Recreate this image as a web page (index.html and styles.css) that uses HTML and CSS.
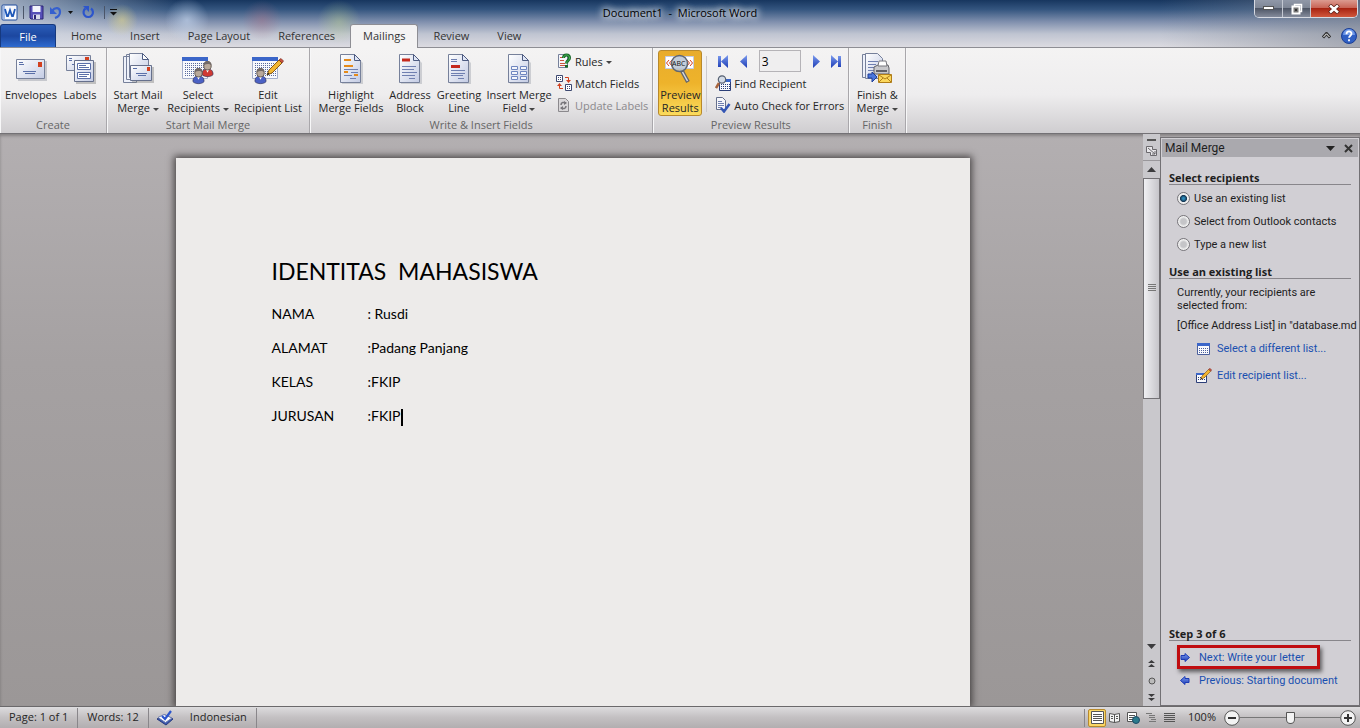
FILE: index.html
```html
<!DOCTYPE html>
<html lang="en">
<head>
    <meta charset="UTF-8">
    <meta name="viewport" content="width=device-width, initial-scale=1.0">
    <title>Document1 - Microsoft Word</title>
    <link rel="stylesheet" href="styles.css">
</head>
<body>
    <!-- shared icon shapes -->
    <svg class="defs" aria-hidden="true">
        <defs>
            <linearGradient id="paper" x1="0" y1="0" x2="1" y2="1">
                <stop offset="0" stop-color="#ffffff"/><stop offset="1" stop-color="#c3cbe4"/>
            </linearGradient>
            <linearGradient id="blue" x1="0" y1="0" x2="0" y2="1">
                <stop offset="0" stop-color="#7d9df0"/><stop offset="1" stop-color="#1c3bb4"/>
            </linearGradient>
            <symbol id="sheet" viewBox="0 0 24 32">
                <path d="M3 3h14l7 7v21H3z" fill="#8a8f9c" opacity=".35"/>
                <path d="M1.500 1.500h14l6 6v22h-20z" fill="url(#paper)" stroke="#76809a"/>
                <path d="M15.500 1.500v6h6z" fill="#dfe5f5" stroke="#4c5a80"/>
            </symbol>
            <symbol id="grid" viewBox="0 0 26 23">
                <path d="M.5.500h25v21H.5z" fill="#f8f9fd" stroke="#a4aecb"/>
                <path d="M0 0h26v4H0z" fill="#3b66c9"/>
                <path d="M3 6.500h21M3 8.500h21M3 10.500h21M3 12.500h21M3 14.500h21M3 16.500h21M3 18.500h21" stroke="#5a6a9c" stroke-dasharray="1 1"/>
            </symbol>
            <symbol id="person" viewBox="0 0 14 18">
                <path d="M1 15c0-5 3-6 6-6s6 1 6 6c-2 3-10 3-12 0z" fill="currentColor" stroke="#2d2f55" stroke-width=".7"/>
                <path d="M5 9l2 4 2-4z" fill="#fff"/>
                <ellipse cx="7" cy="5.500" rx="4" ry="4.500" fill="#b9a99a" stroke="#5d534d"/>
                <path d="M3 5c0-6 8-6 8 0-2-2-5-2-8 0z" fill="#716966"/>
            </symbol>
            <symbol id="pencil" viewBox="0 0 18 18">
                <path d="M1 17l2-5L13 2l3 3L6 15z" fill="#f2b632" stroke="#8a5a14"/>
                <path d="M13 2l2-1.500 2.500 2.500L16 5z" fill="#c9523e" stroke="#7a2d25" stroke-width=".7"/>
                <path d="M1 17l1-2.500L3.500 16z" fill="#222"/>
            </symbol>
        </defs>
    </svg>

    <header class="top">
        <div class="titlebar">
            <div class="quick-access">
                <button class="qa" aria-label="Word">
                    <svg width="17" height="17" viewBox="0 0 17 17"><rect x="1" y="1" width="15" height="15" rx="1" fill="#f7f9fd" stroke="#1c4a9c"/><path d="M2 2h2v13H2z" fill="#9fb9e6"/><path d="M4 5l2 7h1l2-6 2 6h1l2-7" fill="none" stroke="#1d57b8" stroke-width="1.800"/></svg>
                </button>
                <span class="bar"></span>
                <button class="qa" aria-label="Save">
                    <svg width="15" height="15" viewBox="0 0 15 15"><path d="M1 1h13v13H2l-1-1z" fill="#5750b8" stroke="#2c2575"/><path d="M3.500 1h8v6h-8z" fill="#f3f4fc"/><path d="M4 9.500h7V14H4z" fill="#d9dbea"/><path d="M5 10h2v4H5z" fill="#2c2575"/></svg>
                </button>
                <button class="qa" aria-label="Undo">
                    <svg width="14" height="15" viewBox="0 0 14 15"><path d="M3 6c3-4 8-4 8 1 0 3-2 5-5 6" fill="none" stroke="#3560cf" stroke-width="2.200"/><path d="M1 2v7h7z" fill="#3560cf"/></svg>
                </button>
                <svg width="5" height="3"><path d="M0 0h5L2.500 3z" fill="#111"/></svg>
                <button class="qa redo" aria-label="Repeat">
                    <svg width="13" height="14" viewBox="0 0 13 14"><path d="M9 3.500a4.700 4.700 0 1 1-5.500 0" fill="none" stroke="#2c55cc" stroke-width="2.200"/><path d="M1 1h6v6z" fill="#2c55cc"/></svg>
                </button>
                <span class="bar"></span>
                <svg width="7" height="7"><path d="M0 .500h7" stroke="#111"/><path d="M0 3h7L3.500 6.500z" fill="#111"/></svg>
            </div>
            <div class="title">Document1&nbsp; -&nbsp; Microsoft Word</div>
            <div class="window-buttons">
                <button aria-label="Minimize"><svg width="11" height="5"><rect x=".5" y=".5" width="10" height="3" fill="#fff" stroke="#555"/></svg></button>
                <button aria-label="Restore"><svg width="12" height="12"><path d="M3.500 1.500h7v7h-7z" fill="none" stroke="#fff" stroke-width="1.500"/><path d="M1.500 3.500h7v7h-7z" fill="#777" stroke="#fff" stroke-width="2"/><path d="M4 6h2v2H4z" fill="#333"/></svg></button>
                <button class="close" aria-label="Close"><svg width="12" height="10"><path d="M1.500 1l9 8M10.500 1l-9 8" stroke="#5e2018" stroke-width="4"/><path d="M2 1.500l8 7M10 1.500l-8 7" stroke="#fff" stroke-width="2.500"/></svg></button>
            </div>
        </div>
        <nav class="tabs">
            <button class="tab file">File</button>
            <button class="tab">Home</button>
            <button class="tab">Insert</button>
            <button class="tab">Page Layout</button>
            <button class="tab">References</button>
            <button class="tab active">Mailings</button>
            <button class="tab">Review</button>
            <button class="tab">View</button>
            <div class="help">
                <button aria-label="Minimize the Ribbon"><svg width="9" height="7"><path d="M1 5.500l3.500-4 3.500 4" fill="none" stroke="#333" stroke-width="3"/><path d="M1.500 5l3-3.200 3 3.200" fill="none" stroke="#fff"/></svg></button>
                <button aria-label="Help"><svg width="16" height="16"><circle cx="8" cy="8" r="7.500" fill="#2f5fc4" stroke="#1c3f94"/><path d="M2 7a6 6 0 0 1 12 0z" fill="#6f98e6"/><path d="M5.500 6.200c0-3.600 5-3.600 5-.4 0 1.900-2.400 2-2.400 4M8 11.200v2" fill="none" stroke="#fff" stroke-width="1.800"/></svg></button>
            </div>
        </nav>
    </header>

    <section class="ribbon">
        <div class="group">
            <div class="tools">
                <button class="big w54">
                    <svg width="34" height="32"><path d="M4 8h29v20H4z" fill="#8a8f9c" opacity=".4"/><path d="M2.500 6.500h28v19h-28z" fill="url(#paper)" stroke="#76809a"/><path d="M5 9.500h4M5 11.500h5M9 18.500h13M11 20.500h10" stroke="#5a6fa8"/><path d="M24 9h4v5h-4z" fill="#d2401f"/></svg>
                    <span>Envelopes</span>
                </button>
                <button class="big w44">
                    <svg width="32" height="32"><path d="M2.500 2.500h24v15h-24z" fill="url(#paper)" stroke="#76809a"/><path d="M5 5.500h3M5 7.500h3M8 11.500h3" stroke="#5a6fa8"/><path d="M21 4h4v4h-4z" fill="#d2401f"/><path d="M12 9h20v22H12z" fill="#777" opacity=".4"/><path d="M10.500 7.500h19v21h-19z" fill="url(#paper)" stroke="#66708c"/><path d="M13.500 10.500h13v6h-13zM13.500 19.500h13v6h-13z" fill="#fff" stroke="#5a6fa8"/><path d="M15 12.500h7M15 14.500h10M15 21.500h10M15 23.500h8" stroke="#5a6fa8"/></svg>
                    <span>Labels</span>
                </button>
            </div>
            <div class="group-name">Create</div>
        </div>

        <div class="group">
            <div class="tools">
                <button class="big w54">
                    <svg width="32" height="32"><path d="M1.500 3.500h13v26h-13zM4.500 1.500h14v25h-14z" fill="#eef1fa" stroke="#76809a"/><path d="M7.500.500h13l6 6v18h-19z" fill="url(#paper)" stroke="#76809a"/><path d="M20.500.500v6h6z" fill="#fff" stroke="#4c5a80"/><path d="M10 14h22v16H10z" fill="#777" opacity=".4"/><path d="M8.500 12.500h21v15h-21z" fill="url(#paper)" stroke="#66708c"/><path d="M11 15.500h4M14 20.500h11M16 22.500h8" stroke="#5a6fa8"/><path d="M25 14h3v4h-3z" fill="#d2401f"/></svg>
                    <span>Start Mail<br>Merge <i class="arrow"></i></span>
                </button>
                <button class="big w66">
                    <svg width="32" height="32"><use href="#grid" x="0" y="4" width="26" height="23"/><use href="#person" x="19" y="7" width="13" height="18" class="red"/><use href="#person" x="10" y="14" width="13" height="18" class="navy"/></svg>
                    <span>Select<br>Recipients <i class="arrow"></i></span>
                </button>
                <button class="big w74">
                    <svg width="32" height="32"><use href="#grid" x="0" y="4" width="26" height="23"/><use href="#pencil" x="14" y="5" width="18" height="18"/><use href="#person" x="2" y="14" width="13" height="18" class="navy"/></svg>
                    <span>Edit<br>Recipient List</span>
                </button>
            </div>
            <div class="group-name">Start Mail Merge</div>
        </div>

        <div class="group">
            <div class="tools">
                <button class="big w74">
                    <svg width="24" height="32"><use href="#sheet"/><path d="M5 7h7M5 13h9M5 19h4M15 22h4" stroke="#e58a1b" stroke-width="2"/><path d="M5 16.500h14M12 19.500h7M5 22.500h8M11 25.500h6" stroke="#6f7fb0"/></svg>
                    <span>Highlight<br>Merge Fields</span>
                </button>
                <button class="big w44">
                    <svg width="24" height="32"><use href="#sheet"/><path d="M4 7h8" stroke="#c5291c" stroke-width="3"/><path d="M4 13.500h14M4 16.500h12M4 19.500h15M4 22.500h13M11 25.500h6" stroke="#6f7fb0"/></svg>
                    <span>Address<br>Block</span>
                </button>
                <button class="big w54">
                    <svg width="24" height="32"><use href="#sheet"/><path d="M4 13.500h9" stroke="#c5291c" stroke-width="3"/><path d="M4 6.500h6M4 8.500h6M4 17.500h14M4 20.500h14M4 22.500h12M11 25.500h6" stroke="#6f7fb0"/></svg>
                    <span>Greeting<br>Line</span>
                </button>
                <button class="big w66">
                    <svg width="24" height="32"><use href="#sheet"/><path d="M4.500 13.500h6v3h-6zM13.500 13.500h6v3h-6zM4.500 18.500h6v3h-6zM13.500 18.500h6v3h-6zM4.500 23.500h6v3h-6zM13.500 23.500h6v3h-6z" fill="#f4f6fc" stroke="#6f86c0"/></svg>
                    <span>Insert Merge<br>Field <i class="arrow"></i></span>
                </button>
                <div class="stack">
                    <button class="small">
                        <svg width="16" height="16"><path d="M2.500 1.500h9v13h-9z" fill="#f5f6fa" stroke="#76809a"/><path d="M4 4.500h4M4 7.500h4M4 10.500h5M4 12.500h5" stroke="#c9523e"/><path d="M7.500 5c0-4 6-4 6 0 0 2.500-3 2.500-3 5.500M10.500 12v2.500" fill="none" stroke="#17682a" stroke-width="3"/><path d="M7.500 5c0-4 6-4 6 0 0 2.500-3 2.500-3 5.500" fill="none" stroke="#4dbb55"/></svg>
                        <span>Rules <i class="arrow"></i></span>
                    </button>
                    <button class="small">
                        <svg width="16" height="16"><path d="M.5.500h6v6h-6zM9.500 9.500h6v6h-6z" fill="#fff" stroke="#3d4870"/><path d="M2 2.500h3M2 4.500h3M11 11.500h3M11 13.500h3" stroke="#3d4870" stroke-dasharray="1 1"/><path d="M9 2.500h3.500V6M7 13.500H3.500V10" fill="none" stroke="#d2401f"/><path d="M10 5h5l-2.500 3zM1 11h5L3.500 8z" fill="#d2401f"/></svg>
                        <span>Match Fields</span>
                    </button>
                    <button class="small" disabled>
                        <svg width="16" height="16"><path d="M2.500 1.500h7l3 3v10h-10z" fill="#d9d7d9" stroke="#8b898d"/><path d="M5 8c0-3 3-3 5-2M10 9c0 3-3 3-5 2" fill="none" stroke="#77757a" stroke-width="1.500"/><path d="M8 4l3 2-3 2zM7 9l-3 2 3 2z" fill="#77757a"/></svg>
                        <span>Update Labels</span>
                    </button>
                </div>
            </div>
            <div class="group-name">Write &amp; Insert Fields</div>
        </div>

        <div class="group">
            <div class="tools">
                <button class="big preview">
                    <svg width="32" height="32"><path d="M1.500 3.500h28v12h-28z" fill="#fff" stroke="#c3cbe4"/><path d="M5 7l-2.500 3L5 13M8 7l-2.500 3L8 13M23 7l2.500 3L23 13M26 7l2.500 3L26 13" fill="none" stroke="#d2401f"/><path d="M18 18l6 11" stroke="#64666c" stroke-width="4"/><path d="M18.500 19l5 9" stroke="#d7d9de" stroke-width="1.500"/><circle cx="15.500" cy="10.500" r="8" fill="#b9c4d4" fill-opacity=".85" stroke="#5f6672" stroke-width="1.500"/><text x="8" y="13" class="abc">ABC</text></svg>
                    <span>Preview<br>Results</span>
                </button>
                <span class="rule"></span>
                <div class="stack">
                    <div class="record">
                        <button aria-label="First Record"><svg width="12" height="13"><path d="M1 1h3v11H1zM11 0v13L4 6.500z" fill="url(#blue)"/></svg></button>
                        <button aria-label="Previous Record"><svg width="8" height="13"><path d="M7 0v13L0 6.500z" fill="url(#blue)"/></svg></button>
                        <input type="text" value="3" aria-label="Record">
                        <button aria-label="Next Record"><svg width="8" height="13"><path d="M1 0v13l7-6.500z" fill="url(#blue)"/></svg></button>
                        <button aria-label="Last Record"><svg width="12" height="13"><path d="M8 1h3v11H8zM1 0v13l7-6.500z" fill="url(#blue)"/></svg></button>
                    </div>
                    <button class="small">
                        <svg width="16" height="16"><path d="M4.500 5.500h11v10h-11z" fill="#f8f9fd" stroke="#2c3f78"/><path d="M10 4h6v3h-6z" fill="#3b66c9"/><path d="M6 9.500h9M6 11.500h9M6 13.500h9" stroke="#2c3f78" stroke-dasharray="1 1"/><path d="M4 8l-3 5" stroke="#a8643c" stroke-width="2.500"/><circle cx="7" cy="4.500" r="3.700" fill="#d3dbe6" stroke="#555f70" stroke-width="1.200"/></svg>
                        <span>Find Recipient</span>
                    </button>
                    <button class="small">
                        <svg width="16" height="16"><path d="M1.500.500h6l3 3v9h-9z" fill="#f5f6fa" stroke="#66708c"/><path d="M3 4.500h4M3 6.500h6M3 8.500h6M3 10.500h4" stroke="#6f7fb0"/><path d="M6 11l3 3.500L14.500 7" fill="none" stroke="#3456b4" stroke-width="2.500"/></svg>
                        <span>Auto Check for Errors</span>
                    </button>
                </div>
            </div>
            <div class="group-name">Preview Results</div>
        </div>

        <div class="group">
            <div class="tools">
                <button class="big w48">
                    <svg width="32" height="32"><path d="M1.500 1.500h13v23h-13z" fill="#eef1fa" stroke="#76809a"/><path d="M4.500.500h12l5 5v20h-17z" fill="url(#paper)" stroke="#76809a"/><path d="M7 8.500h10M7 11.500h8M7 14.500h6M7 17.500h6" stroke="#6f7fb0"/><path d="M13 14l4-2h10l1 3v6H13z" fill="#c8c8cb" stroke="#606066"/><path d="M17 13l1-5h7l1 5z" fill="#fff" stroke="#77777c"/><path d="M15 18h11" stroke="#606066" stroke-width="2"/><path d="M7 21v4h4v4l5-5-5-5v2z" fill="#4a76dc" stroke="#203f98"/><path d="M17.500 21.500h13v8h-13z" fill="#fbd75c" stroke="#b07d18"/><path d="M18 22l6 4 6-4M18 29l4-4M30 29l-4-4" fill="none" stroke="#b07d18"/></svg>
                    <span>Finish &amp;<br>Merge <i class="arrow"></i></span>
                </button>
            </div>
            <div class="group-name">Finish</div>
        </div>
    </section>

    <main class="workspace">
        <div class="canvas">
            <article class="page">
                <h1>IDENTITAS&nbsp; MAHASISWA</h1>
                <p><span>NAMA</span><span>: Rusdi</span></p>
                <p><span>ALAMAT</span><span>:Padang Panjang</span></p>
                <p><span>KELAS</span><span>:FKIP</span></p>
                <p><span>JURUSAN</span><span class="caret">:FKIP</span></p>
            </article>
        </div>

        <div class="scrollbar">
            <span class="split"></span>
            <button class="ruler" aria-label="View Ruler"><svg width="12" height="12"><path d="M.5 1.500h6v3h4v6h-6v-3h-4z" fill="#e8e7ea" stroke="#6b696d"/><path d="M2 3l7 6M6 9h3V6" fill="none" stroke="#6b696d"/></svg></button>
            <button aria-label="Scroll up"><svg width="9" height="5"><path d="M0 5h9L4.500 0z" fill="#3c3c3e"/></svg></button>
            <div class="track">
                <div class="thumb"><svg width="8" height="8"><path d="M0 .500h8M0 2.500h8M0 4.500h8M0 6.500h8" stroke="#777"/></svg></div>
            </div>
            <button aria-label="Scroll down"><svg width="9" height="5"><path d="M0 0h9L4.500 5z" fill="#3c3c3e"/></svg></button>
            <button class="browse" aria-label="Previous Page"><svg width="7" height="7"><path d="M0 3h7L3.500 0zM0 7h7L3.500 4z" fill="#3c3c3e"/></svg></button>
            <button class="browse" aria-label="Select Browse Object"><svg width="8" height="8"><circle cx="4" cy="4" r="3" fill="#bbb" stroke="#555"/></svg></button>
            <button class="browse" aria-label="Next Page"><svg width="7" height="7"><path d="M0 0h7L3.500 3zM0 4h7L3.500 7z" fill="#3c3c3e"/></svg></button>
        </div>

        <aside class="pane">
            <div class="pane-title">
                <span>Mail Merge</span>
                <button aria-label="Task Pane Options"><svg width="9" height="5"><path d="M0 0h9L4.500 5z" fill="#222"/></svg></button>
                <button aria-label="Close pane"><svg width="9" height="9"><path d="M1 1l7 7M8 1L1 8" stroke="#333" stroke-width="2"/></svg></button>
            </div>
            <div class="pane-body">
                <h2>Select recipients</h2>
                <div class="options">
                    <label><input type="radio" name="source" checked>Use an existing list</label>
                    <label><input type="radio" name="source">Select from Outlook contacts</label>
                    <label><input type="radio" name="source">Type a new list</label>
                </div>
                <h2>Use an existing list</h2>
                <div class="details">
                    <p>Currently, your recipients are selected from:</p>
                    <p class="source">[Office Address List] in "database.md</p>
                    <a href="#"><svg width="16" height="16"><path d="M1.500 2.500h12v11h-12z" fill="#f8f9fd" stroke="#4b5f9c"/><path d="M1 2h13v3H1z" fill="#3b66c9"/><path d="M3 7.500h10M3 9.500h10M3 11.500h10" stroke="#4b5f9c" stroke-dasharray="1 1"/></svg>Select a different list...</a>
                    <a href="#"><svg width="16" height="16"><path d="M.5 5.500h10v9H.5z" fill="#f8f9fd" stroke="#2c3f78"/><path d="M0 5h8v2H0z" fill="#3b66c9"/><path d="M2 9.500h7M2 11.500h7" stroke="#2c3f78" stroke-dasharray="1 1"/><use href="#pencil" x="4" y="0" width="12" height="12"/></svg>Edit recipient list...</a>
                </div>
                <div class="steps">
                    <h2>Step 3 of 6</h2>
                    <a class="marked" href="#"><svg width="10" height="9"><path d="M1 2.500h4V.500l4.500 4-4.500 4v-2H1z" fill="url(#blue)" stroke="#1c3bb4"/></svg>Next: Write your letter</a>
                    <a href="#"><svg width="10" height="9"><path d="M9 2.500H5V.500L.5 4.500l4.500 4v-2h4z" fill="url(#blue)" stroke="#1c3bb4"/></svg>Previous: Starting document</a>
                </div>
            </div>
        </aside>
    </main>

    <footer class="status">
        <button>Page: 1 of 1</button>
        <button>Words: 12</button>
        <button class="proof" aria-label="Proofing"><svg width="18" height="16"><path d="M1 9l8-4 8 4-7 6z" fill="#3c58b0" stroke="#26397c"/><path d="M2 7.500l6-3 8 3.500-6.500 4.500z" fill="#fff" stroke="#6b7bb0"/><path d="M6 6l3 3 6-8" fill="none" stroke="#2c55cc" stroke-width="2.200"/></svg></button>
        <button class="language">Indonesian</button>
        <div class="views">
            <button class="selected" aria-label="Print Layout"><svg width="13" height="13"><path d="M.5.500h12v12H.5z" fill="#fff" stroke="#555"/><path d="M2 3.500h9M2 5.500h9M2 7.500h9M2 9.500h9" stroke="#555"/></svg></button>
            <button aria-label="Full Screen Reading"><svg width="12" height="12"><path d="M.5 1.500l5 1 5-1v8l-5 1-5-1zM5.500 2v9" fill="#f3f3f3" stroke="#555"/><path d="M2 4.500h2M2 6.500h2M7 4.500h2M7 6.500h2" stroke="#555"/></svg></button>
            <button aria-label="Web Layout"><svg width="13" height="13"><path d="M.5 1.500h9v9h-9z" fill="#fff" stroke="#555"/><path d="M2 4.500h6M2 6.500h6M2 8.500h4" stroke="#555"/><circle cx="9" cy="9" r="3.500" fill="#2b7a8c" stroke="#1d4a66"/></svg></button>
            <button aria-label="Outline"><svg width="11" height="11"><path d="M0 1.500h6M3 3.500h6M3 5.500h6M5 7.500h5M3 9.500h7" stroke="#777"/></svg></button>
            <button aria-label="Draft"><svg width="11" height="11"><path d="M0 1.500h11M0 3.500h11M0 5.500h11M0 7.500h11M0 9.500h11" stroke="#555"/></svg></button>
        </div>
        <button class="percent">100%</button>
        <div class="zoom">
            <button aria-label="Zoom Out"><svg width="16" height="16"><circle cx="8" cy="8" r="7.300" fill="#f3f3f3" stroke="#555"/><path d="M4 8h8" stroke="#333" stroke-width="2"/></svg></button>
            <input type="range" min="0" max="100" value="50" aria-label="Zoom">
            <button aria-label="Zoom In"><svg width="16" height="16"><circle cx="8" cy="8" r="7.300" fill="#f3f3f3" stroke="#555"/><path d="M4 8h8M8 4v8" stroke="#333" stroke-width="2"/></svg></button>
        </div>
    </footer>
</body>
</html>
```
FILE: styles.css
```css
* {
    box-sizing: border-box;
}
body {
    margin: 0;
    height: 100vh;
    display: flex;
    flex-direction: column;
    overflow: hidden;
    font-family: "Open Sans", "Noto Sans", sans-serif;
    font-size: 11px;
    line-height: 13px;
    color: #262626;
}
button {
    margin: 0;
    padding: 0;
    border: none;
    background: none;
    font: inherit;
    color: inherit;
    white-space: nowrap;
}
svg {
    flex: none;
    display: block;
}
.defs {
    position: absolute;
    width: 0;
    height: 0;
}
.red {
    color: #cf3a34;
}
.navy {
    color: #4b61c4;
}

/* title bar and tabs */
.top {
    background:
        radial-gradient(circle at 122px 20px, rgba(235, 220, 130, 0.5), transparent 16px),
        radial-gradient(circle at 187px 20px, rgba(205, 222, 245, 0.6), transparent 22px),
        radial-gradient(circle at 262px 20px, rgba(170, 110, 130, 0.4), transparent 20px),
        radial-gradient(circle at 339px 22px, rgba(190, 212, 140, 0.4), transparent 22px),
        linear-gradient(to right, rgba(215, 220, 230, 0.7), rgba(215, 220, 230, 0) 180px),
        linear-gradient(to left, rgba(130, 136, 148, 0.6), rgba(130, 136, 148, 0) 200px),
        linear-gradient(#17365f, #34557f 20%, #7f8fad 46%, #bfc4d1 72%, #dcdbe1);
    border-bottom: 1px solid #8e8e94;
}
.titlebar {
    display: grid;
    grid-template-columns: 1fr auto 1fr;
    height: 24px;
}
.quick-access {
    display: flex;
    align-items: center;
    gap: 5px;
    padding-left: 1px;
}
.quick-access .bar {
    width: 1px;
    height: 13px;
    background: #4b5568;
}
.qa {
    display: flex;
}
.redo {
    margin: 0 4px;
}
.title {
    align-self: center;
    color: #000;
    text-shadow: 0 0 6px #fff, 0 0 8px #fff, 0 0 10px #fff;
}
.window-buttons {
    display: flex;
    justify-self: end;
    height: 18px;
    margin-right: 2px;
    border: 1px solid #d7dae2;
    border-top: none;
    border-radius: 0 0 5px 5px;
    overflow: hidden;
}
.window-buttons button {
    width: 28px;
    display: flex;
    align-items: center;
    justify-content: center;
    border-right: 1px solid #c3c8d2;
    background: linear-gradient(#9098a8, #7d8594 50%, #4e5666 50%, #848b9b);
}
.window-buttons .close {
    width: 46px;
    border: none;
    background: linear-gradient(#dc9b90, #c65f50 50%, #a82412 50%, #d0573c);
}
.tabs {
    display: flex;
    gap: 2px;
    height: 23px;
}
.tab {
    padding: 0 13px;
    color: #333;
}
.tab.file {
    width: 56px;
    border: 1px solid #16397f;
    border-bottom: none;
    border-radius: 3px 3px 0 0;
    background: linear-gradient(#2b5db8, #1c47a0 50%, #2f6bd0);
    color: #fff;
}
.tab.active {
    border: 1px solid #8e8e94;
    border-bottom: none;
    border-radius: 3px 3px 0 0;
    background: #f4f3f3;
    margin-bottom: -1px;
    padding: 0 12px 2px;
}
.help {
    margin-left: auto;
    display: flex;
    align-items: center;
    gap: 10px;
    padding-right: 3px;
}

/* ribbon */
.ribbon {
    display: flex;
    border-bottom: 1px solid #737175;
    background: linear-gradient(#f4f3f3, #eeedee 55%, #cfcdd0);
}
.group {
    display: flex;
    flex-direction: column;
    padding: 2px 4px 1px;
    border-right: 1px solid #a9a7ab;
    box-shadow: inset 1px 0 #f7f7f8, 1px 0 #f7f7f8;
}
.tools {
    display: flex;
    height: 68px;
}
.group-name {
    text-align: center;
    color: #666;
    line-height: 14px;
}
.big {
    display: flex;
    flex-direction: column;
    align-items: center;
    gap: 3px;
    padding-top: 3px;
}
.big span {
    text-align: center;
}
.w44 {
    width: 44px;
}
.w48 {
    width: 48px;
}
.w54 {
    width: 54px;
}
.w66 {
    width: 66px;
}
.w74 {
    width: 74px;
}
.arrow {
    display: inline-block;
    vertical-align: middle;
    border: 3px solid transparent;
    border-top-color: #444;
    border-bottom: none;
}
.stack {
    display: flex;
    flex-direction: column;
    padding-left: 4px;
}
.small {
    display: flex;
    align-items: center;
    gap: 3px;
    height: 22px;
}
.small:disabled {
    color: #8b898d;
}
.preview {
    width: 44px;
    height: 66px;
    margin-left: 1px;
    border: 1px solid #b8892c;
    border-radius: 3px;
    padding-top: 2px;
    background: linear-gradient(#e8ac2c, #eeb32b 50%, #fbdb5c);
}
.abc {
    font-size: 7px;
    fill: #111;
}
.rule {
    width: 1px;
    margin: 6px 4px;
    background: #cbc9cd;
}
.record {
    display: flex;
    align-items: center;
    justify-content: space-between;
    height: 22px;
    padding: 0 2px;
}
.record input {
    width: 42px;
    height: 22px;
    padding: 0 2px;
    border: 1px solid #b5b3b7;
    background: #efeeef;
    font: inherit;
    font-size: 12px;
    color: #000;
}

/* document area */
.workspace {
    flex: 1;
    min-height: 0;
    display: flex;
    background: linear-gradient(#b3afb1, #a5a1a2 40%, #9b9797);
    box-shadow: inset 0 2px 3px rgba(0, 0, 0, 0.25);
}
.canvas {
    flex: 1;
    display: flex;
    justify-content: center;
    padding: 24px 0 0 2px;
    overflow: hidden;
}
.page {
    width: 794px;
    padding: 95px 96px;
    background: #edebea;
    box-shadow: 0 0 7px 2px rgba(40, 36, 36, 0.75);
    font-family: Lato, "Open Sans", sans-serif;
    font-size: 14px;
    line-height: 20px;
    color: #000;
}
.page h1 {
    margin: 0 0 15px;
    font-size: 23px;
    font-weight: normal;
    line-height: 36px;
}
.page p {
    display: grid;
    grid-template-columns: 96px 1fr;
    margin: 0 0 14px;
}
.caret::after {
    content: "";
    display: inline-block;
    width: 2px;
    height: 17px;
    vertical-align: middle;
    background: #000;
}
.scrollbar {
    width: 17px;
    display: flex;
    flex-direction: column;
    background: #c9c8cc;
}
.scrollbar button {
    display: flex;
    align-items: center;
    justify-content: center;
    height: 17px;
}
.split {
    width: 9px;
    height: 2px;
    margin: 5px auto 0;
    background: #555;
}
.scrollbar .ruler {
    height: 20px;
    border-bottom: 1px solid #99979b;
}
.track {
    flex: 1;
}
.thumb {
    height: 48%;
    display: flex;
    align-items: center;
    justify-content: center;
    border: 1px solid #737175;
    background: linear-gradient(to right, #f0f0f3, #c6c5ca);
}

/* task pane */
.pane {
    width: 200px;
    display: flex;
    flex-direction: column;
    margin-top: 3px;
    border: 1px solid #737175;
    background: #d1cfd4;
    font-family: Roboto, "Open Sans", sans-serif;
    color: #1e1e1e;
}
.pane-title {
    display: flex;
    align-items: center;
    gap: 9px;
    height: 18px;
    margin: 1px 1px 0;
    padding: 0 5px 0 3px;
    background: #aaa9ae;
    font-size: 12px;
}
.pane-title span {
    flex: 1;
}
.pane-body {
    flex: 1;
    display: flex;
    flex-direction: column;
    padding: 14px 2px 13px 8px;
}
.pane h2 {
    margin: 0 6px 0 0;
    border-bottom: 1px solid #88868b;
    font-family: "Open Sans", sans-serif;
    font-size: 11px;
    line-height: 13px;
}
.options {
    padding: 2px 0 9px 8px;
}
.options label {
    display: flex;
    align-items: center;
    gap: 4px;
    height: 23px;
    white-space: nowrap;
}
.options input {
    appearance: none;
    width: 13px;
    height: 13px;
    margin: 0;
    border: 1px solid #77757a;
    border-radius: 50%;
    background: radial-gradient(circle, #c5c5c8 35%, #f0f0f0 60%);
}
.options input:checked {
    background: radial-gradient(circle, #2e8dbd 10%, #123553 40%, #eee 50%);
}
.details {
    padding-left: 8px;
}
.details p {
    margin: 7px 0;
}
.details .source {
    margin-bottom: 3px;
    white-space: nowrap;
}
.pane a {
    display: flex;
    align-items: center;
    color: #1a4fb0;
    text-decoration: none;
    white-space: nowrap;
}
.details a {
    gap: 5px;
    height: 27px;
    padding-left: 19px;
}
.steps {
    margin-top: auto;
}
.steps a {
    gap: 9px;
    height: 23px;
    padding-left: 11px;
}
.steps .marked {
    width: 143px;
    height: 24px;
    margin: 4px 0 0 8px;
    padding-left: 0;
    border: 3px solid #c00d10;
    box-shadow: 2px 3px 4px rgba(0, 0, 0, 0.55);
}

/* status bar */
.status {
    display: flex;
    align-items: center;
    height: 22px;
    border-top: 1px solid #6b696b;
    background: linear-gradient(#dddcde, #c3c0c2 50%, #b2aeb0);
}
.status > button {
    height: 20px;
    padding: 0 9px 2px;
    border-right: 1px solid #89868a;
}
.status .proof {
    padding: 0 7px;
    border: none;
}
.status .language {
    padding-left: 9px;
}
.views {
    display: flex;
    margin-left: auto;
    padding: 0 2px 0 3px;
    border-left: 1px solid #89868a;
}
.views button {
    width: 18px;
    height: 18px;
    display: flex;
    align-items: center;
    justify-content: center;
}
.views .selected {
    border: 1px solid #b8892c;
    border-radius: 2px;
    background: #fad766;
}
.status .percent {
    padding: 0 8px 2px;
    border: none;
}
.zoom {
    display: flex;
    align-items: center;
    padding-right: 4px;
}
.zoom input {
    appearance: none;
    width: 100px;
    height: 16px;
    margin: 0;
    background: linear-gradient(#777, #777) center / 100% 1px no-repeat;
}
.zoom input::-webkit-slider-thumb {
    appearance: none;
    width: 9px;
    height: 12px;
    border: 1px solid #555;
    border-radius: 1px 1px 5px 5px;
    background: #f3f3f3;
}
```
